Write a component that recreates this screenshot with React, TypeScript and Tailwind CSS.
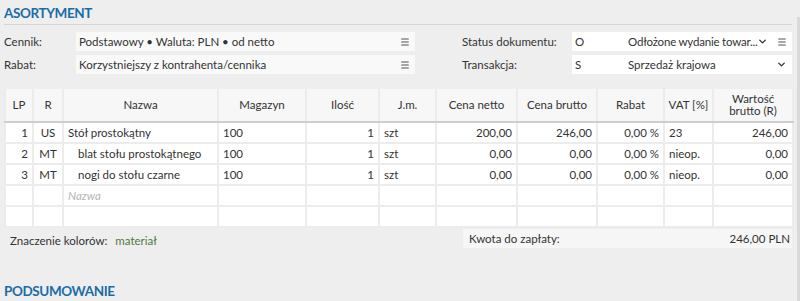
import { ChevronDown, Menu } from 'lucide-react';

const COLS = [
  { label: 'LP', w: 28 },
  { label: 'R', w: 30 },
  { label: 'Nazwa', w: 155 },
  { label: 'Magazyn', w: 88 },
  { label: 'Ilość', w: 73 },
  { label: 'J.m.', w: 57 },
  { label: 'Cena netto', w: 81 },
  { label: 'Cena brutto', w: 80 },
  { label: 'Rabat', w: 67 },
  { label: 'VAT [%]', w: 49 },
  { label: 'Wartość brutto (R)', w: 80 },
];

const ROWS = [
  { lp: '1', r: 'US', name: 'Stół prostokątny', indent: false, mag: '100', qty: '1', jm: 'szt', netto: '200,00', brutto: '246,00', rabat: '0,00 %', vat: '23', wart: '246,00' },
  { lp: '2', r: 'MT', name: 'blat stołu prostokątnego', indent: true, mag: '100', qty: '1', jm: 'szt', netto: '0,00', brutto: '0,00', rabat: '0,00 %', vat: 'nieop.', wart: '0,00' },
  { lp: '3', r: 'MT', name: 'nogi do stołu czarne', indent: true, mag: '100', qty: '1', jm: 'szt', netto: '0,00', brutto: '0,00', rabat: '0,00 %', vat: 'nieop.', wart: '0,00' },
];

const td = 'h-[21px] px-[4px] border-2 border-[#ececec] bg-white whitespace-nowrap overflow-hidden';

export default function App() {
  return (
    <div className="relative w-[800px] h-[301px] overflow-hidden bg-[#eeeeee] text-[#333333] text-[11.5px] font-['Lato',sans-serif]">
      {/* scrollbar */}
      <div className="absolute right-0 top-[17px] bottom-0 w-[3px] bg-[#d9d9d9]" />

      <div className="pl-[4px] pr-[8px]">
        <h2 className="pt-[3px] h-[24px] text-[13.5px] font-bold text-[#1b6ca6] tracking-[-0.4px]">ASORTYMENT</h2>
        <div className="h-px bg-[#d6d6d6]" />

        {/* form fields */}
        <div className="flex mt-[7px]">
          <div className="w-[411px] shrink-0 flex flex-col gap-[4px]">
            <div className="flex items-center h-[19px]">
              <span className="w-[72px]">Cennik:</span>
              <div className="flex-1 h-full bg-[#f9f9f9] flex items-center pl-[3px] pr-[5px]">
                <span className="flex-1">Podstawowy • Waluta: PLN • od netto</span>
                <Menu className="w-[10px] h-[10px] text-[#555]" strokeWidth={2.5} />
              </div>
            </div>
            <div className="flex items-center h-[19px]">
              <span className="w-[72px]">Rabat:</span>
              <div className="flex-1 h-full bg-[#f9f9f9] flex items-center pl-[3px] pr-[5px]">
                <span className="flex-1">Korzystniejszy z kontrahenta/cennika</span>
                <Menu className="w-[10px] h-[10px] text-[#555]" strokeWidth={2.5} />
              </div>
            </div>
          </div>
          <div className="ml-[47px] flex-1 min-w-0 flex flex-col gap-[4px]">
            <div className="flex items-center h-[19px]">
              <span className="w-[110px] shrink-0">Status dokumentu:</span>
              <div className="flex-1 min-w-0 h-full bg-white flex items-center pl-[3px] pr-[5px]">
                <span className="w-[53px] shrink-0">O</span>
                <span className="flex-1 min-w-0 whitespace-nowrap tracking-[-0.2px]">Odłożone wydanie towar...</span>
                <ChevronDown className="w-[11px] h-[11px] mr-[9px] shrink-0" strokeWidth={3} />
                <Menu className="w-[10px] h-[10px] text-[#555] shrink-0" strokeWidth={2.5} />
              </div>
            </div>
            <div className="flex items-center h-[19px]">
              <span className="w-[110px] shrink-0">Transakcja:</span>
              <div className="flex-1 min-w-0 h-full bg-white flex items-center pl-[3px] pr-[5px]">
                <span className="w-[53px] shrink-0">S</span>
                <span className="flex-1">Sprzedaż krajowa</span>
                <ChevronDown className="w-[11px] h-[11px] shrink-0" strokeWidth={3} />
              </div>
            </div>
          </div>
        </div>

        {/* table */}
        <table className="mt-[15px] table-fixed border-collapse w-[788px]">
          <colgroup>
            {COLS.map((c) => (
              <col key={c.label} style={{ width: c.w }} />
            ))}
          </colgroup>
          <thead>
            <tr className="h-[33px]">
              {COLS.map((c) => (
                <th key={c.label} className="font-normal text-center px-[1px] whitespace-nowrap bg-[#f7f7f7] border-x-2 border-[#ececec] border-b-2 border-b-[#cfcfcf] leading-[12px]">
                  {c.label === 'Wartość brutto (R)' ? (<>Wartość<br />brutto (R)</>) : c.label}
                </th>
              ))}
            </tr>
          </thead>
          <tbody>
            {ROWS.map((r) => (
              <tr key={r.lp}>
                <td className={td + ' text-right'}>{r.lp}</td>
                <td className={td + ' text-center'}>{r.r}</td>
                <td className={td + (r.indent ? ' pl-[14px]' : '')}>{r.name}</td>
                <td className={td}>{r.mag}</td>
                <td className={td + ' text-right'}>{r.qty}</td>
                <td className={td}>{r.jm}</td>
                <td className={td + ' text-right'}>{r.netto}</td>
                <td className={td + ' text-right'}>{r.brutto}</td>
                <td className={td + ' text-right'}>{r.rabat}</td>
                <td className={td}>{r.vat}</td>
                <td className={td + ' text-right'}>{r.wart}</td>
              </tr>
            ))}
            <tr>
              <td className={td}></td>
              <td className={td}></td>
              <td className={td + ' italic text-[#b5b5b5]'}>Nazwa</td>
              {Array.from({ length: 8 }).map((_, i) => (
                <td key={i} className={td}></td>
              ))}
            </tr>
            <tr>
              {Array.from({ length: 11 }).map((_, i) => (
                <td key={i} className={td}></td>
              ))}
            </tr>
          </tbody>
        </table>

        {/* footer */}
        <div className="flex mt-[1px]">
          <div className="flex-1 pl-[6px] pt-[3px]">
            Znaczenie kolorów:<span className="ml-[8px] text-[#4e7a3c]">materiał</span>
          </div>
          <div className="w-[329px] h-[19px] bg-[#f6f6f6] flex items-center justify-between pl-[6px] pr-[2px]">
            <span>Kwota do zapłaty:</span>
            <span>246,00 PLN</span>
          </div>
        </div>

        <h2 className="mt-[32px] text-[13.5px] font-bold text-[#1b6ca6] tracking-[-0.4px]">PODSUMOWANIE</h2>
      </div>
    </div>
  );
}
